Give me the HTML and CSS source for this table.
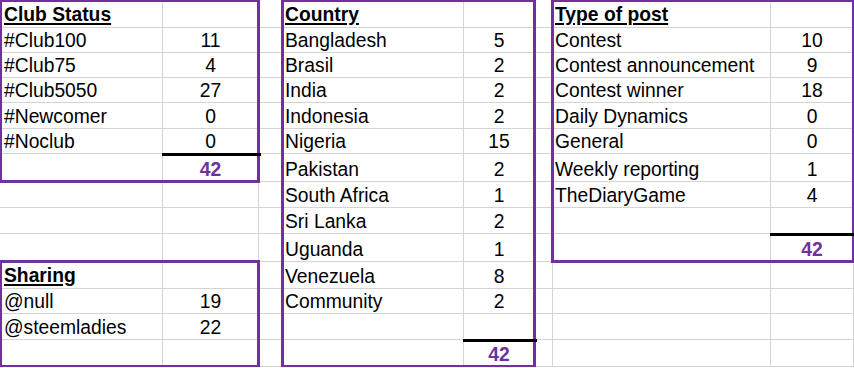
FILE: index.html
```html
<!DOCTYPE html>
<html lang="en">
<head>
<meta charset="utf-8">
<title>Statistics</title>
<link rel="stylesheet" href="styles.css">
</head>
<body>
<div class="stack">
<div class="sheet cells">
  <!-- row 1 -->
  <div class="cell first"><span class="head">Club Status</span></div><div class="cell"></div><div class="cell"></div>
  <div class="cell"><span class="head">Country</span></div><div class="cell"></div><div class="cell"></div>
  <div class="cell"><span class="head">Type of post</span></div><div class="cell"></div>
  <!-- row 2 -->
  <div class="cell first">#Club100</div><div class="cell num">11</div><div class="cell"></div>
  <div class="cell">Bangladesh</div><div class="cell num">5</div><div class="cell"></div>
  <div class="cell">Contest</div><div class="cell num">10</div>
  <!-- row 3 -->
  <div class="cell first">#Club75</div><div class="cell num">4</div><div class="cell"></div>
  <div class="cell">Brasil</div><div class="cell num">2</div><div class="cell"></div>
  <div class="cell">Contest announcement</div><div class="cell num">9</div>
  <!-- row 4 -->
  <div class="cell first">#Club5050</div><div class="cell num">27</div><div class="cell"></div>
  <div class="cell">India</div><div class="cell num">2</div><div class="cell"></div>
  <div class="cell">Contest winner</div><div class="cell num">18</div>
  <!-- row 5 -->
  <div class="cell first">#Newcomer</div><div class="cell num">0</div><div class="cell"></div>
  <div class="cell">Indonesia</div><div class="cell num">2</div><div class="cell"></div>
  <div class="cell">Daily Dynamics</div><div class="cell num">0</div>
  <!-- row 6 -->
  <div class="cell first">#Noclub</div><div class="cell num">0</div><div class="cell"></div>
  <div class="cell">Nigeria</div><div class="cell num">15</div><div class="cell"></div>
  <div class="cell">General</div><div class="cell num">0</div>
  <!-- row 7 -->
  <div class="cell first"></div><div class="cell num total">42</div><div class="cell"></div>
  <div class="cell">Pakistan</div><div class="cell num">2</div><div class="cell"></div>
  <div class="cell">Weekly reporting</div><div class="cell num">1</div>
  <!-- row 8 -->
  <div class="cell first"></div><div class="cell"></div><div class="cell"></div>
  <div class="cell">South Africa</div><div class="cell num">1</div><div class="cell"></div>
  <div class="cell">TheDiaryGame</div><div class="cell num">4</div>
  <!-- row 9 -->
  <div class="cell first"></div><div class="cell"></div><div class="cell"></div>
  <div class="cell">Sri Lanka</div><div class="cell num">2</div><div class="cell"></div>
  <div class="cell"></div><div class="cell"></div>
  <!-- row 10 -->
  <div class="cell first"></div><div class="cell"></div><div class="cell"></div>
  <div class="cell">Uguanda</div><div class="cell num">1</div><div class="cell"></div>
  <div class="cell"></div><div class="cell num total">42</div>
  <!-- row 11 -->
  <div class="cell first"><span class="head">Sharing</span></div><div class="cell"></div><div class="cell"></div>
  <div class="cell">Venezuela</div><div class="cell num">8</div><div class="cell"></div>
  <div class="cell"></div><div class="cell"></div>
  <!-- row 12 -->
  <div class="cell first">@null</div><div class="cell num">19</div><div class="cell"></div>
  <div class="cell">Community</div><div class="cell num">2</div><div class="cell"></div>
  <div class="cell"></div><div class="cell"></div>
  <!-- row 13 -->
  <div class="cell first">@steemladies</div><div class="cell num">22</div><div class="cell"></div>
  <div class="cell"></div><div class="cell"></div><div class="cell"></div>
  <div class="cell"></div><div class="cell"></div>
  <!-- row 14 -->
  <div class="cell first"></div><div class="cell"></div><div class="cell"></div>
  <div class="cell"></div><div class="cell num total">42</div><div class="cell"></div>
  <div class="cell"></div><div class="cell"></div>
</div>

<div class="sheet overlay">
  <!-- outlined groups -->
  <div class="box box-top box-left box-club"></div>
  <div class="box box-left box-sharing"></div>
  <div class="box box-top box-country"></div>
  <div class="box box-top box-type"></div>

  <!-- sum rules -->
  <div class="rule rule-club"></div>
  <div class="rule rule-country"></div>
  <div class="rule rule-type"></div>
</div>
</div>
</body>
</html>
```

FILE: styles.css
```css
html, body {
  margin: 0;
  padding: 0;
  background: #ffffff;
}

body {
  font-family: "Liberation Sans", Arial, sans-serif;
  font-size: 19.3px;
  color: #000000;
  overflow: hidden;
}

.stack {
  display: grid;
  width: 854px;
}

.sheet {
  grid-area: 1 / 1;
  display: grid;
  grid-template-columns: 163px 96px 24px 181px 71px 18px 218px 83px;
  grid-template-rows: 28px 25px 25px 25px 26px 25px 28px 26px 26px 28px 27px 25px 26px 27px;
  width: 854px;
}

.overlay {
  pointer-events: none;
}

.cell {
  box-sizing: border-box;
  border-right: 1px solid #d4d4d4;
  border-bottom: 1px solid #d4d4d4;
  display: flex;
  align-items: flex-end;
  padding: 0 2px 2px 2px;
  line-height: 19px;
  white-space: nowrap;
  min-width: 0;
}

.cell.first {
  padding-left: 4px;
}

.cell.num {
  justify-content: center;
  padding-left: 0;
  padding-right: 0;
}

.cell.total {
  font-weight: bold;
  color: #7030a0;
}

.head {
  font-weight: bold;
  text-decoration: underline;
  text-decoration-thickness: 2px;
  text-underline-offset: 2px;
  padding-bottom: 1px;
}

.box {
  box-sizing: border-box;
  border: 3px solid #7030a0;
  margin: -2px -1px -1px -2px;
}

.box-top {
  margin-top: -1px;
}

.box-left {
  margin-left: -1px;
}

.box-club {
  grid-column: 1 / 3;
  grid-row: 1 / 8;
}

.box-sharing {
  grid-column: 1 / 3;
  grid-row: 11 / 15;
}

.box-country {
  grid-column: 4 / 6;
  grid-row: 1 / 15;
}

.box-type {
  grid-column: 7 / 9;
  grid-row: 1 / 11;
}

.rule {
  align-self: start;
  height: 3px;
  background: #000000;
  margin: -1px -2px 0 -1px;
}

.rule-club {
  grid-column: 2 / 3;
  grid-row: 7 / 8;
}

.rule-country {
  grid-column: 5 / 6;
  grid-row: 14 / 15;
}

.rule-type {
  grid-column: 8 / 9;
  grid-row: 10 / 11;
}
```
